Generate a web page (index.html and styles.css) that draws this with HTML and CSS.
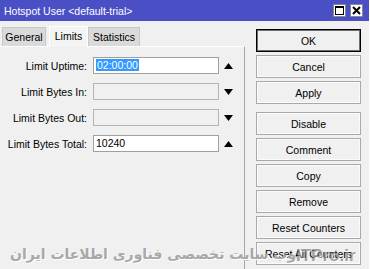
FILE: index.html
```html
<!DOCTYPE html>
<html lang="en">
  <head>
    <title>Hotspot User</title>
    <meta charset="utf-8" />
    <link rel="stylesheet" href="styles.css">
  </head>
  <body>
    <div class="window">
      <div class="titlebar">
        <span class="title">Hotspot User &lt;default-trial&gt;</span>
        <div class="titleBtns">
          <span class="tbtn">
            <svg width="9" height="9" viewBox="0 0 9 9"><rect x="0.5" y="0.5" width="8" height="8" fill="none" stroke="#000"/><rect x="0" y="0" width="9" height="2" fill="#000"/></svg>
          </span>
          <span class="tbtn">
            <svg width="9" height="9" viewBox="0 0 9 9"><path d="M1 1 L8 8 M8 1 L1 8" stroke="#000" stroke-width="2"/></svg>
          </span>
        </div>
      </div>
      <div class="main">
        <div class="left">
          <div class="tabs">
            <span class="tab general">General</span>
            <span class="tab active">Limits</span>
            <span class="tab stats">Statistics</span>
          </div>
          <div class="panel">
            <div class="row">
              <label>Limit Uptime:</label>
              <div class="field"><span class="selected">02:00:00</span></div>
              <svg class="arrow" width="9" height="6" viewBox="0 0 9 6"><path d="M4.5 0 L9 6 L0 6 Z"/></svg>
            </div>
            <div class="row">
              <label>Limit Bytes In:</label>
              <div class="field off"></div>
              <svg class="arrow" width="9" height="6" viewBox="0 0 9 6"><path d="M0 0 L9 0 L4.5 6 Z"/></svg>
            </div>
            <div class="row">
              <label>Limit Bytes Out:</label>
              <div class="field off"></div>
              <svg class="arrow" width="9" height="6" viewBox="0 0 9 6"><path d="M0 0 L9 0 L4.5 6 Z"/></svg>
            </div>
            <div class="row">
              <label>Limit Bytes Total:</label>
              <div class="field">10240</div>
              <svg class="arrow" width="9" height="6" viewBox="0 0 9 6"><path d="M4.5 0 L9 6 L0 6 Z"/></svg>
            </div>
          </div>
        </div>
        <div class="right">
          <button class="btn default">OK</button>
          <button class="btn">Cancel</button>
          <button class="btn">Apply</button>
          <button class="btn spaced">Disable</button>
          <button class="btn">Comment</button>
          <button class="btn">Copy</button>
          <button class="btn">Remove</button>
          <button class="btn">Reset Counters</button>
          <button class="btn">Reset All Counters</button>
        </div>
      </div>
      <div class="watermark">
        <span class="fa">وب سایت تخصصی فناوری اطلاعات ایران</span>
      </div>
      <span class="brand">ITPro.ir</span>
    </div>
  </body>
</html>
```

FILE: styles.css
```css
body {
  margin: 0;
  background-color: #f0f0f0;
  font-family: "Liberation Sans", Arial, sans-serif;
  font-size: 10.5px;
  color: #000;
}
.window {
  position: relative;
  width: 370px;
  height: 269px;
  overflow: hidden;
  border-right: 1px solid #fff;
  box-sizing: border-box;
}
.titlebar {
  height: 21px;
  background-color: #4b4fc6;
  color: #fff;
  display: flex;
  align-items: center;
  padding-left: 4px;
  font-size: 10.5px;
}
.titleBtns {
  margin-left: auto;
  display: flex;
  gap: 4px;
  padding-right: 6px;
}
.tbtn {
  width: 13px;
  height: 13px;
  background-color: #fff;
  border: 1px solid #888;
  box-sizing: border-box;
  display: flex;
  align-items: center;
  justify-content: center;
}

.main {
  display: flex;
}
.left {
  width: 245px;
}
.tabs {
  display: flex;
  align-items: flex-end;
  height: 25px;
  padding-left: 2px;
}
.tab {
  height: 19px;
  line-height: 19px;
  background-color: #dadada;
  border: 1px solid #c8c8c8;
  border-bottom: none;
  box-sizing: border-box;
  text-align: center;
  font-size: 10.5px;
}
.tab.general {
  width: 44px;
  margin-right: 3px;
}
.tab.stats {
  width: 52px;
}
.tab.active {
  width: 39px;
  height: 21px;
  line-height: 19px;
  background-color: #f4f4f4;
  border-color: #fff;
  position: relative;
  top: 1px;
}
.panel {
  height: 223px;
  border-top: 1px solid #fff;
  border-right: 1px solid #a8a8a8;
  box-sizing: border-box;
  padding-top: 10px;
  display: flex;
  flex-direction: column;
  gap: 9px;
}
.row {
  display: flex;
  align-items: center;
  height: 17px;
}
.row label {
  width: 93px;
  text-align: right;
  padding-right: 6px;
  box-sizing: border-box;
}
.field {
  width: 126px;
  height: 17px;
  box-sizing: border-box;
  border: 1px solid #a0a0a0;
  background-color: #fff;
  padding-left: 2px;
  line-height: 15px;
}
.field.off {
  background-color: #f0f0f0;
  border-color: #b4b4b4;
}
.selected {
  background-color: #3399ff;
  color: #fff;
  padding: 0 1px;
}
.arrow {
  margin-left: 5px;
  fill: #000;
}

.right {
  display: flex;
  flex-direction: column;
  gap: 3px;
  padding-top: 8px;
  margin-left: 11px;
}
.btn {
  width: 105px;
  height: 23px;
  margin: 0;
  padding: 0;
  background-color: #f0f0f0;
  border: 1px solid #a9a9a9;
  box-shadow: inset 0 0 0 1px #fbfbfb;
  font-family: "Liberation Sans", Arial, sans-serif;
  font-size: 10.5px;
  color: #000;
}
.btn.default {
  border: 1px solid #000;
  box-shadow: inset 0 0 0 1px #6e6e6e;
}
.btn.spaced {
  margin-top: 5px;
}

.watermark {
  position: absolute;
  left: 10px;
  top: 246px;
  display: flex;
}
.fa {
  font-family: "DejaVu Sans", sans-serif;
  font-size: 14px;
  font-weight: bold;
  color: #a8a8a8;
  text-shadow: 1px 1px 0 #fff;
  direction: rtl;
}
.brand {
  position: absolute;
  left: 296px;
  top: 246px;
  font-family: "Liberation Sans", sans-serif;
  font-size: 17px;
  font-weight: bold;
  color: rgba(80, 80, 80, 0.5);
  text-shadow: 1px 1px 0 rgba(255, 255, 255, 0.6);
}
```
